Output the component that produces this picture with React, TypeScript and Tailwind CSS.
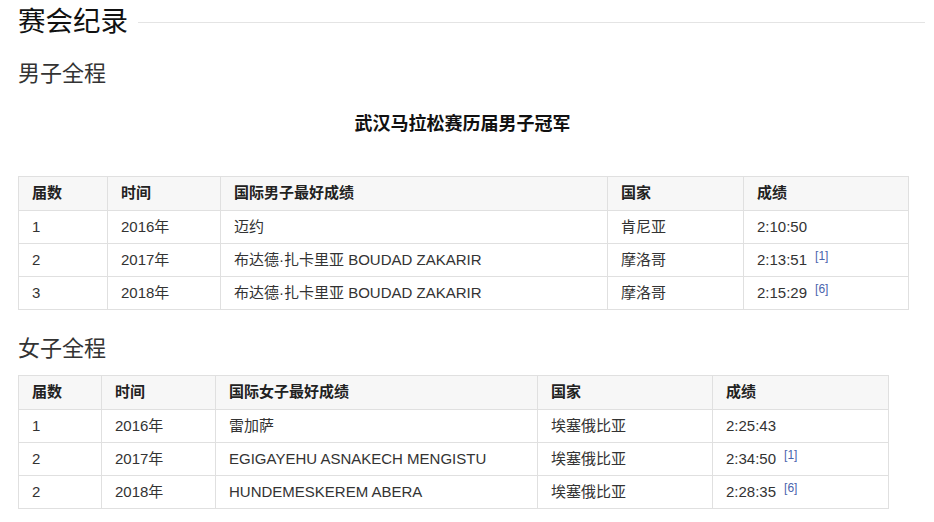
import React from "react";

type Row = { n: string; year: string; name: string; country: string; time: string; ref?: string };

const menRows: Row[] = [
  { n: "1", year: "2016年", name: "迈约", country: "肯尼亚", time: "2:10:50" },
  { n: "2", year: "2017年", name: "布达德·扎卡里亚 BOUDAD ZAKARIR", country: "摩洛哥", time: "2:13:51", ref: "[1]" },
  { n: "3", year: "2018年", name: "布达德·扎卡里亚 BOUDAD ZAKARIR", country: "摩洛哥", time: "2:15:29", ref: "[6]" },
];

const womenRows: Row[] = [
  { n: "1", year: "2016年", name: "雷加萨", country: "埃塞俄比亚", time: "2:25:43" },
  { n: "2", year: "2017年", name: "EGIGAYEHU ASNAKECH MENGISTU", country: "埃塞俄比亚", time: "2:34:50", ref: "[1]" },
  { n: "2", year: "2018年", name: "HUNDEMESKEREM ABERA", country: "埃塞俄比亚", time: "2:28:35", ref: "[6]" },
];

const font = "font-['Liberation_Sans','Noto_Sans_CJK_SC',sans-serif]";

const ResultTable = ({
  rows,
  nameHead,
  widths,
  tableW,
}: {
  rows: Row[];
  nameHead: string;
  widths: string[];
  tableW: string;
}) => {
  const th = "h-[34px] border border-[#e0e0e0] bg-[#f7f7f7] pl-[13px] text-left font-bold text-[#222] align-middle";
  const td = "h-[33px] border border-[#e0e0e0] pl-[13px] text-[#333] align-middle";
  return (
    <table className={`${tableW} table-fixed border-collapse text-[15px]`}>
      <colgroup>
        {widths.map((w, i) => (
          <col key={i} className={w} />
        ))}
      </colgroup>
      <thead>
        <tr>
          <th className={th}>届数</th>
          <th className={th}>时间</th>
          <th className={th}>{nameHead}</th>
          <th className={th}>国家</th>
          <th className={th}>成绩</th>
        </tr>
      </thead>
      <tbody>
        {rows.map((r, i) => (
          <tr key={i}>
            <td className={td}>{r.n}</td>
            <td className={td}>{r.year}</td>
            <td className={td}>{r.name}</td>
            <td className={td}>{r.country}</td>
            <td className={td}>
              {r.time}
              {r.ref && (
                <sup className="ml-[8px] relative -top-[5px] text-[12px] text-[#4a64ad]">{r.ref}</sup>
              )}
            </td>
          </tr>
        ))}
      </tbody>
    </table>
  );
};

export default function App() {
  return (
    <div className={`${font} w-[934px] h-[522px] bg-white pl-[18px] pr-[9px] pt-[4px] overflow-hidden`}>
      {/* 赛会纪录 */}
      <div className="flex items-center">
        <h1 className="text-[27.5px] leading-[36px] text-[#111]">赛会纪录</h1>
        <div className="ml-[10px] h-px flex-1 bg-[#e4e4e4]" />
      </div>

      {/* 男子全程 */}
      <h2 className="mt-[19px] text-[22px] leading-[30px] text-[#333]">男子全程</h2>
      <div className="mt-[24px] pr-[18px] text-center text-[18px] leading-[22px] font-bold text-[#111]">
        武汉马拉松赛历届男子冠军
      </div>
      <div className="mt-[41px]">
        <ResultTable
          rows={menRows}
          nameHead="国际男子最好成绩"
          tableW="w-[890px]"
          widths={["w-[89px]", "w-[113px]", "w-[387px]", "w-[136px]", "w-[165px]"]}
        />
      </div>

      {/* 女子全程 */}
      <h2 className="mt-[24px] text-[22px] leading-[30px] text-[#333]">女子全程</h2>
      <div className="mt-[11px]">
        <ResultTable
          rows={womenRows}
          nameHead="国际女子最好成绩"
          tableW="w-[870px]"
          widths={["w-[83px]", "w-[114px]", "w-[322px]", "w-[175px]", "w-[176px]"]}
        />
      </div>
    </div>
  );
}
